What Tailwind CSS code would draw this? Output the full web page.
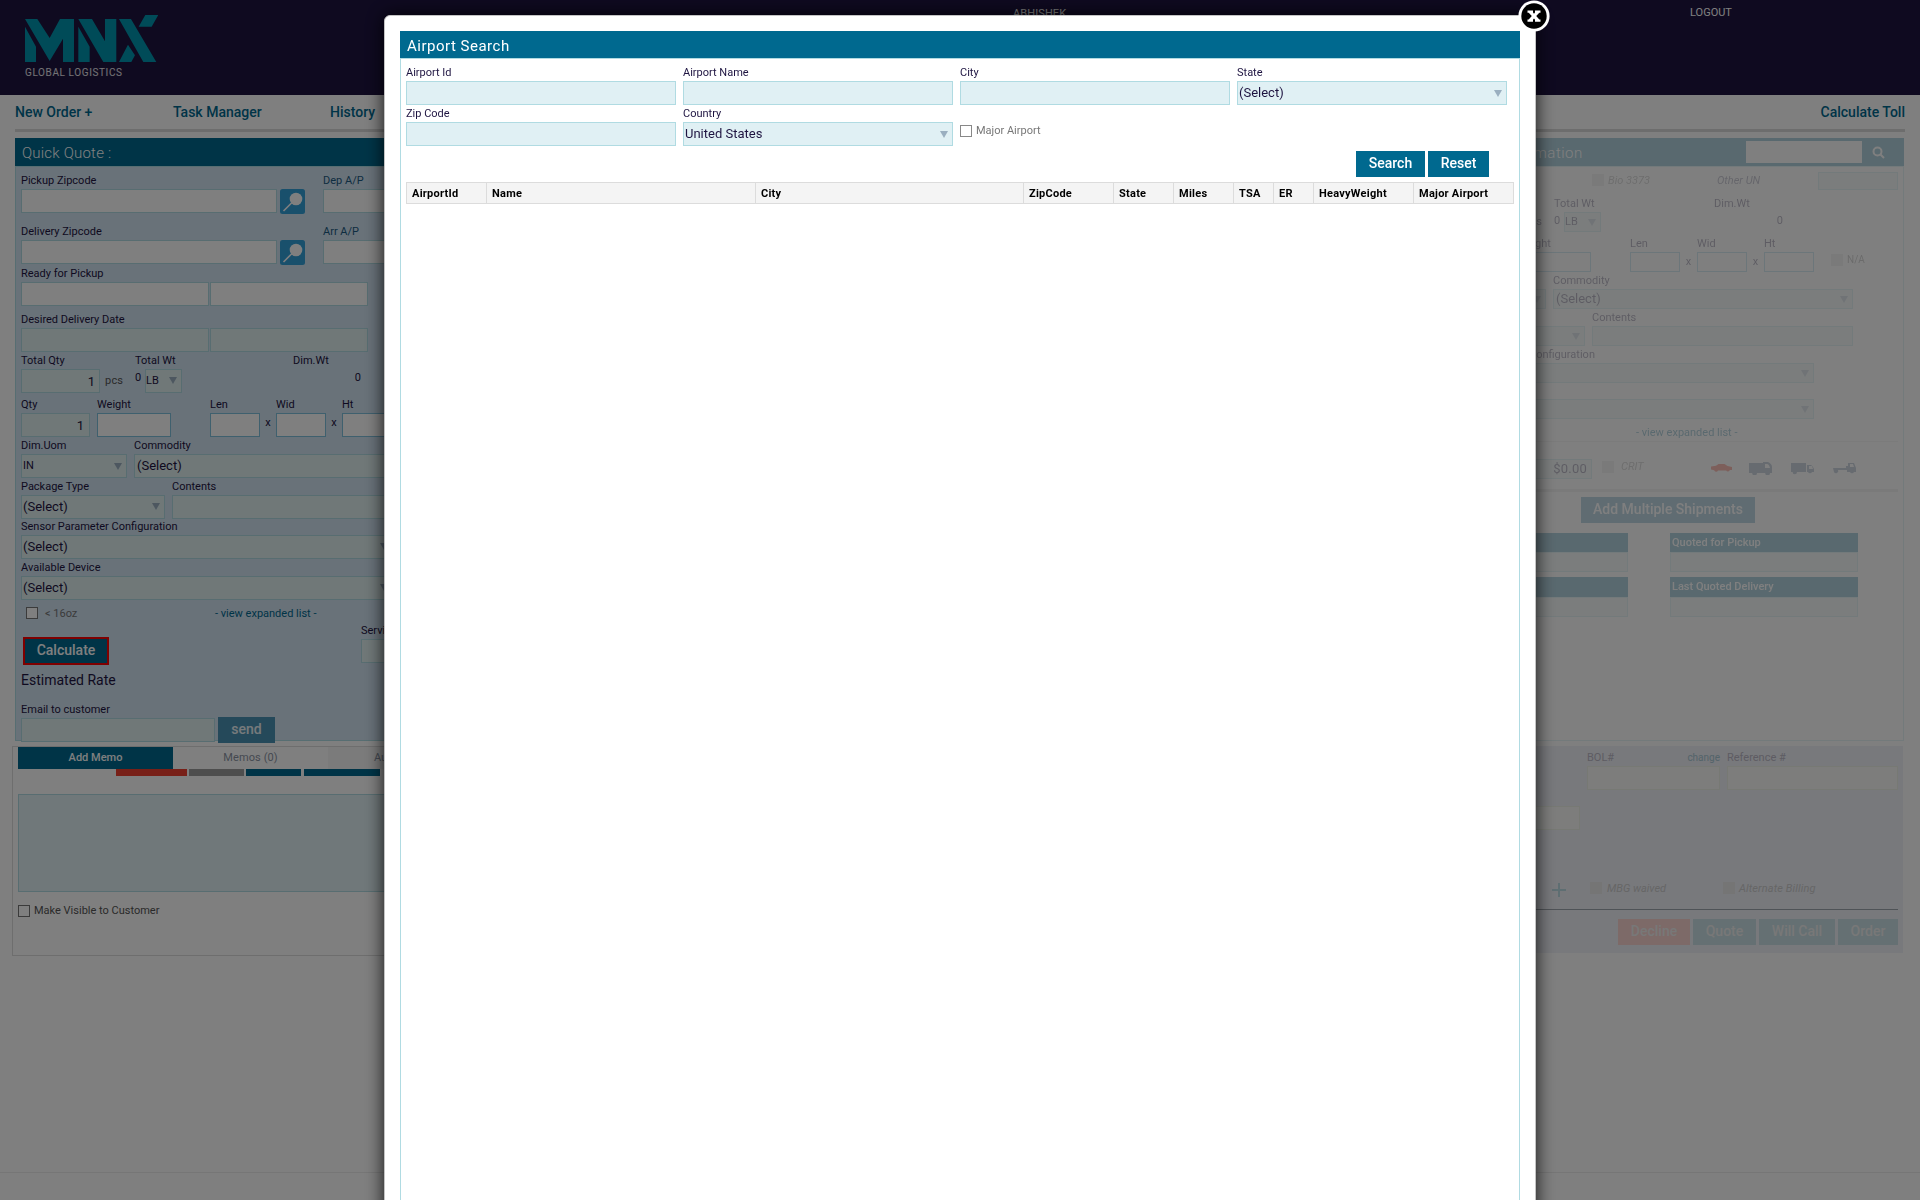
<!DOCTYPE html>
<html lang="en">
<head>
<meta charset="utf-8">
<title>MNX Global Logistics</title>
<script src="https://cdn.jsdelivr.net/npm/@tailwindcss/browser@4"></script>
</head>
<body class="relative h-[1200px] w-[1920px] overflow-hidden bg-white font-['Roboto',sans-serif] text-[11px] leading-[16px] text-[#1e1441]">
<svg class="hidden">
  <symbol id="lens" viewBox="0 0 25 25"><rect width="25" height="25" rx="2.5" fill="#33a1d9"/><circle cx="16" cy="10" r="6.3" fill="#fff"/><path d="M3.5 22 12 13.5" stroke="#fff" stroke-width="1.6"/></symbol>
  <symbol id="tri" viewBox="0 0 8 7"><path d="M0 0h8L4 7z" fill="#9aafc0"/></symbol>
</svg>

<header class="flex h-[95px] bg-[#1e1441] text-white">
  <div class="w-[988px] pl-[25px] pt-[15px]">
    <svg class="h-[47px] w-[133.3px]" viewBox="75 45 400 141" fill="#0097b0"><path d="M75 80 108 140V186H75zM75 57H112L149 114 180 57H222V186H189V116L149 183zM235 80 269 140V186H235zM235 57H276L315 124V57H349V186H310zM357 57H393L469 186H430zM384 134 405 166 394 186H357zM436 45H475L455 80H416z"/></svg>
    <div class="mt-[3px] text-[10px] tracking-[0.6px] text-white/90">GLOBAL LOGISTICS</div>
  </div>
  <div class="w-[677px] pl-[25px] pt-[6px] tracking-[0.1px]">ABHISHEK</div>
  <div class="pl-[25px] pt-[5px]">LOGOUT</div>
</header>

<nav class="mx-[15px] flex h-[37px] border-b-3 border-[#dadada] pt-[9px] text-[14px] font-medium text-[#00698f]">
  <div class="w-[158px]">New Order +</div>
  <div class="w-[157px]">Task Manager</div>
  <div>History</div>
  <div class="ml-auto">Calculate Toll</div>
</nav>

<main class="mt-[6px] flex h-[608px] justify-between pl-[15px] pr-[16px]">
  <section class="w-[500px]">
    <h2 class="h-[28px] bg-[#00698f] pl-[7px] text-[15px] leading-[31px] font-light tracking-[0.2px] text-white">Quick Quote :</h2>
    <div class="h-[575px] border border-[#aedde4] bg-[#d2e4f3] pl-[5px]">
      <div class="flex h-[46px] items-end">
        <div class="w-[256px]">Pickup Zipcode<div class="h-6 border border-[#b0dbe2] bg-white"></div></div>
        <svg class="-mb-px ml-[3px] size-[25px]"><use href="#lens"/></svg>
        <div class="ml-[18px] w-[150px] text-[#1c5a82]">Dep A/P<div class="h-6 border border-[#b0dbe2] bg-white"></div></div>
      </div>
      <div class="flex h-[51px] items-end">
        <div class="w-[256px]">Delivery Zipcode<div class="h-6 border border-[#b0dbe2] bg-white"></div></div>
        <svg class="-mb-px ml-[3px] size-[25px]"><use href="#lens"/></svg>
        <div class="ml-[18px] w-[150px] text-[#1c5a82]">Arr A/P<div class="h-6 border border-[#b0dbe2] bg-white"></div></div>
      </div>
      <div class="flex h-[42px] items-end gap-px">
        <div class="w-[188px]">Ready for Pickup<div class="h-6 border border-[#b0dbe2] bg-white"></div></div>
        <div class="h-6 w-[158px] border border-[#b0dbe2] bg-white"></div>
      </div>
      <div class="flex h-[46px] items-end gap-px">
        <div class="w-[188px]">Desired Delivery Date<div class="h-6 border border-[#b0dbe2] bg-[#e0f0f1]"></div></div>
        <div class="h-6 w-[158px] border border-[#b0dbe2] bg-[#e0f0f1]"></div>
      </div>
      <div class="flex h-[41px] items-end">
        <div class="w-[79px]">Total Qty<div class="h-6 border border-[#b0dbe2] bg-[#e0f0f1] pr-[4px] text-right text-[13px] leading-[23px]">1</div></div>
        <div class="w-[30px] pl-[5px] leading-6 tracking-[0.2px] text-[#555]">pcs</div>
        <div class="w-[158px] pl-[5px]">Total Wt
          <div class="flex h-6"><span class="w-[10px] leading-[17px]">0</span><span class="flex w-[37px] items-center justify-between border border-[#b0dbe2] bg-[#e0f0f1] pb-px pr-[4px]">LB<svg class="h-[7px] w-[8px]"><use href="#tri"/></svg></span></div>
        </div>
        <div class="w-[74px] pl-[5px]">Dim.Wt<div class="h-6 pr-[1px] text-right leading-[17px]">0</div></div>
      </div>
      <div class="flex h-[44px] items-end">
        <div class="w-[69px]">Qty<div class="h-6 border border-[#b0dbe2] bg-[#e0f0f1] pr-[5px] text-right text-[13px] leading-[24px]">1</div></div>
        <div class="ml-[7px] w-[74px]">Weight<div class="h-6 border border-[#7fc0dd] bg-white"></div></div>
        <div class="ml-[39px] w-[50px]">Len<div class="h-6 border border-[#7fc0dd] bg-white"></div></div>
        <div class="w-[16px] pb-[6px] text-center">x</div>
        <div class="w-[50px]">Wid<div class="h-6 border border-[#7fc0dd] bg-white"></div></div>
        <div class="w-[16px] pb-[6px] text-center">x</div>
        <div class="w-[50px]">Ht<div class="h-6 border border-[#7fc0dd] bg-white"></div></div>
      </div>
      <div class="flex h-[41px] items-end gap-[7px]">
        <div class="w-[106px]">Dim.Uom<div class="flex h-6 items-center justify-between border border-[#b0dbe2] bg-[#e0f0f1] pl-px pr-[4px]">IN<svg class="h-[7px] w-[8px]"><use href="#tri"/></svg></div></div>
        <div class="w-[300px]">Commodity<div class="h-6 border border-[#b0dbe2] bg-[#e0f0f1] pl-[2px] text-[13px] leading-[22px]">(Select)</div></div>
      </div>
      <div class="flex h-[41px] items-end gap-[7px]">
        <div class="w-[144px]">Package Type<div class="flex h-6 items-center justify-between border border-[#b0dbe2] bg-[#e0f0f1] pb-px pl-px pr-[4px] text-[13px]">(Select)<svg class="h-[7px] w-[8px]"><use href="#tri"/></svg></div></div>
        <div class="w-[262px]">Contents<div class="h-6 border border-[#b0dbe2] bg-[#e0f0f1]"></div></div>
      </div>
      <div class="flex h-[40px] w-[370px] flex-col justify-end">Sensor Parameter Configuration<div class="flex h-6 items-center border border-[#b0dbe2] bg-[#e0f0f1] pb-px pl-px text-[13px]"><span class="w-[357px]">(Select)</span><svg class="h-[7px] w-[8px]"><use href="#tri"/></svg></div></div>
      <div class="flex h-[41px] w-[370px] flex-col justify-end">Available Device<div class="flex h-6 items-center border border-[#b0dbe2] bg-[#e0f0f1] pb-px pl-px text-[13px]"><span class="w-[357px]">(Select)</span><svg class="h-[7px] w-[8px]"><use href="#tri"/></svg></div></div>
      <div class="flex h-[21px] items-end pl-[5px]">
        <span class="mb-[2px] size-3 border border-[#777] bg-white"></span>
        <span class="-mb-px ml-[7px] w-[170px] text-[#777]">&lt; 16oz</span>
        <span class="-mb-px text-[#00698f]">- view expanded list -</span>
      </div>
      <div class="flex h-[44px]">
        <div class="w-[340px] pl-[2px] pt-[16px]"><div class="h-[28px] w-[86px] border-2 border-[red] bg-[#00698f] text-center text-[14px] leading-[23px] font-medium text-white">Calculate</div></div>
        <div class="w-[100px] pt-[2px]">Service<div class="h-6 border border-[#b0dbe2] bg-[#e0f0f1]"></div></div>
      </div>
      <div class="h-[37px] pt-[7px] text-[14px]">Estimated Rate</div>
      <div class="flex items-end gap-[3px]">
        <div class="w-[194px]">Email to customer<div class="h-6 border border-[#b0dbe2] bg-[#e0f0f1]"></div></div>
        <div class="-mb-px h-[26px] w-[57px] bg-[#4a93b5] text-center text-[14px] leading-6 font-medium text-white/90">send</div>
      </div>
    </div>
  </section>

  <section class="w-[384px] opacity-30">
    <h2 class="flex h-[28px] items-center bg-[#00698f] text-[15px] leading-[30px] font-light tracking-[0.5px] text-white">
      <span class="w-[226px] pl-[8px] pt-[2px]">rmation</span>
      <span class="h-[22px] w-[116px] bg-white"></span>
      <svg class="ml-[10px] size-[13px]" viewBox="0 0 13 13" fill="none" stroke="#fff" stroke-width="2"><circle cx="5.5" cy="5.5" r="4"/><path d="m8.5 8.5 3.5 3.5"/></svg>
    </h2>
    <div class="h-[575px] border border-[#b0dbe2]">
      <div class="flex h-[27px] items-start pl-[71px] pt-[5px] italic">
        <span class="mt-[2px] size-3 bg-[#ddd]"></span><span class="w-[113px] pl-[4px] pt-px text-[#888]">Bio 3373</span><span class="w-[101px] pt-px text-[#557]">Other UN</span><span class="h-[18px] w-[80px] border border-[#b0dbe2] bg-[#e0f0f1]"></span>
      </div>
      <div class="flex h-[38px] items-end">
        <div class="h-5 w-[33px] pr-[12px] text-right leading-[20px]">pcs</div>
        <div class="w-[160px]">Total Wt<div class="flex h-5 leading-[18px]"><span class="w-[10px]">0</span><span class="flex w-[37px] items-center justify-between border border-[#b0dbe2] bg-[#e0f0f1] pr-[4px]">LB<svg class="h-[7px] w-[8px]"><use href="#tri"/></svg></span></div></div>
        <div class="w-[76px]">Dim.Wt<div class="h-5 pr-[7px] text-right leading-[18px]">0</div></div>
      </div>
      <div class="flex h-[40px] items-end">
        <div class="w-[70px]"><div class="-ml-[4px]">Weight</div><div class="h-5 border border-[#7fc0dd]"></div></div>
        <div class="ml-[39px] w-[50px]">Len<div class="h-5 border border-[#7fc0dd]"></div></div>
        <div class="w-[17px] pb-[2px] text-center">x</div>
        <div class="w-[50px]">Wid<div class="h-5 border border-[#7fc0dd]"></div></div>
        <div class="w-[17px] pb-[2px] text-center">x</div>
        <div class="w-[50px]">Ht<div class="h-5 border border-[#7fc0dd]"></div></div>
        <span class="mb-[6px] ml-[17px] size-3 bg-[#ddd]"></span><span class="mb-[4px] ml-[4px] text-[10px] text-[#777]">N/A</span>
      </div>
      <div class="flex h-[37px] items-end gap-[7px]">
        <div class="flex h-5 w-[25px] items-center justify-end border border-[#b0dbe2] bg-[#e0f0f1] pr-[4px]"><svg class="h-[7px] w-[8px]"><use href="#tri"/></svg></div>
        <div class="w-[300px]">Commodity<div class="flex h-5 items-center justify-between border border-[#b0dbe2] bg-[#e0f0f1] pl-[2px] pr-[4px] text-[13px]">(Select)<svg class="h-[7px] w-[8px]"><use href="#tri"/></svg></div></div>
      </div>
      <div class="flex h-[37px] items-end gap-[7px]">
        <div class="flex h-5 w-[64px] items-center justify-end border border-[#b0dbe2] bg-[#e0f0f1] pr-[4px]"><svg class="h-[7px] w-[8px]"><use href="#tri"/></svg></div>
        <div class="w-[261px]">Contents<div class="h-5 border border-[#b0dbe2] bg-[#e0f0f1]"></div></div>
      </div>
      <div class="flex h-[37px] w-[293px] flex-col justify-end"><span class="pl-[8px]">Configuration</span><div class="flex h-5 items-center justify-end border border-[#b0dbe2] bg-[#e0f0f1] pr-[4px]"><svg class="h-[7px] w-[8px]"><use href="#tri"/></svg></div></div>
      <div class="mt-[16px] flex h-5 w-[293px] items-center justify-end border border-[#b0dbe2] bg-[#e0f0f1] pr-[4px]"><svg class="h-[7px] w-[8px]"><use href="#tri"/></svg></div>
      <div class="mr-[5px] h-[23px] border-b border-[#e4e4e4] pl-[115px] pt-[6px] text-[#00698f]">- view expanded list -</div>
      <div class="mr-[5px] flex h-[50px] items-start border-b-3 border-[#dadada] pt-[17px]">
        <div class="h-5 w-[71px] border border-[#b0dbe2] bg-[#e0f0f1] pr-[4px] text-right text-[13px] leading-[18px] tracking-[0.2px]">$0.00</div>
        <span class="ml-[10px] mt-[2px] size-3 bg-[#ddd]"></span><span class="w-[97px] pl-[7px] italic text-[#888]">CRIT</span>
        <svg class="mt-[3px] h-[13px] w-[146px]" viewBox="0 0 146 13" fill="#5c7a9a">
          <path d="M0 4.500 5 3.800 7.500 2h6L16.500 4 21 5v3h-2.200a2 2 0 0 1-3.600 0.500H7a2 2 0 0 1-3.800-0.300L0 7.500z" fill="#f02a10"/>
          <path d="M38 1H52V0h5q4 2 4 5v6h-2a2.400 2.400 0 0 1-4.800 0H46a2.400 2.400 0 0 1-4.800 0H38zM54 2v4h5q-1-4-3-4z" fill-rule="evenodd"/>
          <path d="M80 1h15v9H86a2.200 2.200 0 0 1-4.400 0H80zM96 3h4q2 1 3 4v3h-2a2.200 2.200 0 0 1-4 0h-1zM98 4v3h4l-1-3z" fill-rule="evenodd"/>
          <path d="M122 6h13V4h2V1h6l2 5v4h-2a2.200 2.200 0 0 1-4 0h-3V8h-9a2.200 2.200 0 0 1-4 2zM139 2v3h4l-1-3z" fill-rule="evenodd"/>
        </svg>
      </div>
      <div class="ml-[60px] mt-[5px] h-[26px] w-[174px] bg-[#2f7ca5] text-center text-[14px] leading-6 font-medium text-white">Add Multiple Shipments</div>
      <div class="mt-[10px] grid grid-cols-[107px_188px] gap-x-[42px] gap-y-[5px] leading-[19px] font-medium text-white">
        <div><div class="h-[19px] bg-[#00698f]"></div><div class="h-5 border border-[#b0dbe2] bg-[#e0f0f1]"></div></div>
        <div><div class="h-[19px] bg-[#00698f] pl-[2px]">Quoted for Pickup</div><div class="h-5 border border-[#b0dbe2] bg-[#e0f0f1]"></div></div>
        <div><div class="h-5 bg-[#00698f]"></div><div class="h-5 border border-[#b0dbe2] bg-[#e0f0f1]"></div></div>
        <div><div class="h-5 bg-[#00698f] pl-[2px]">Last Quoted Delivery</div><div class="h-5 border border-[#b0dbe2] bg-[#e0f0f1]"></div></div>
      </div>
    </div>
  </section>
</main>

<div class="flex items-start justify-between pl-[12px] pr-[17px]">
  <section class="h-[210px] w-[503px] border border-[#dcdcdc] pl-[5px]">
    <div class="flex h-[22px] text-center leading-[21px] text-[#8a93a3]">
      <div class="w-[155px] bg-[#00698f] font-medium text-white">Add Memo</div>
      <div class="w-[155px] tracking-[0.1px]">Memos (0)</div>
      <div class="w-[155px] bg-[#f6f6f6] pl-[46px] text-left">Audit</div>
    </div>
    <div class="flex h-[7px] pl-[98px]">
      <span class="w-[71px] bg-[#f04030]"></span><span class="ml-[2px] w-[55px] bg-[#9c9c9c]"></span><span class="ml-[2px] w-[55px] bg-[#00698f]"></span><span class="ml-[3px] w-[76px] bg-[#00698f]"></span>
    </div>
    <div class="mt-[18px] h-[98px] border border-[#b0dbe2] bg-[#e0f0f4]"></div>
    <label class="mt-[11px] flex items-center gap-[4px] text-[#555]"><span class="size-3 border border-[#777]"></span>Make Visible to Customer</label>
  </section>

  <section class="h-[207px] w-[383px] bg-[#f0f2f9] pr-[5px] text-[#bcb9c6]">
    <div class="flex pl-[67px] pt-[4px]">
      <div class="w-[133px]"><div class="flex justify-between">BOL#<span class="text-[10px] text-[#a8c8d4]">change</span></div><div class="h-6 border border-[#eef3e8] bg-[#fafbf8]"></div></div>
      <div class="ml-[7px] w-[171px]">Reference #<div class="h-6 border border-[#eef3e8] bg-[#fafbf8]"></div></div>
    </div>
    <div class="mt-[16px] h-6 w-[60px] border border-[#eef3e8] bg-[#fafbf8]"></div>
    <div class="mt-[51px] flex h-[29px] items-start border-b border-[#9fa6ae] italic text-[#cdcdcd]">
      <svg class="ml-[32px] mt-[2px] size-[14px]" viewBox="0 0 14 14"><path d="M7 0v14M0 7h14" stroke="#bddde5" stroke-width="2"/></svg>
      <span class="ml-[24px] mt-[1px] size-3 bg-[#eaeaea]"></span><span class="w-[121px] pl-[5px]">MBG waived</span><span class="mt-[1px] size-3 bg-[#eaeaea]"></span><span class="pl-[4px] tracking-[0.1px]">Alternate Billing</span>
    </div>
    <div class="mt-[9px] flex justify-end gap-[3px] text-center text-[14px] leading-6 font-medium text-[#f0f0f0]">
      <div class="h-[26px] w-[72px] bg-[#fad4d0]">Decline</div><div class="h-[26px] w-[63px] bg-[#cbe0e6]">Quote</div><div class="h-[26px] w-[76px] bg-[#cbe0e6]">Will Call</div><div class="h-[26px] w-[60px] bg-[#cbe0e6]">Order</div>
    </div>
  </section>
</div>
<hr class="mt-[216px] border-[#ececec]">

<div class="absolute inset-0 bg-black/50"></div>

<div class="absolute left-[384px] top-[15px] h-[1220px] w-[1152px] rounded-[6px] border border-[#c4c4c4] bg-white p-[15px] shadow-[0_0_18px_rgba(0,0,0,0.85)]">
  <div class="flex h-full flex-col">
    <h1 class="h-[27px] bg-[#00698f] pl-[7px] text-[15px] leading-[31px] tracking-[0.5px] text-white">Airport Search</h1>
    <div class="grow border border-[#b0dbe2] pl-[5px] pt-[6px]">
      <div class="grid auto-rows-[41px] grid-cols-[270px_270px_270px_270px] gap-x-[7px]">
        <div>Airport Id<div class="h-6 border border-[#b0dbe2] bg-[#e0f0f4]"></div></div>
        <div>Airport Name<div class="h-6 border border-[#b0dbe2] bg-[#e0f0f4]"></div></div>
        <div>City<div class="h-6 border border-[#b0dbe2] bg-[#e0f0f4]"></div></div>
        <div>State<div class="flex h-6 items-center justify-between border border-[#b0dbe2] bg-[#e0f0f4] pl-px pr-[4px] text-[13px]">(Select)<svg class="h-[7px] w-[8px]"><use href="#tri"/></svg></div></div>
        <div>Zip Code<div class="h-6 border border-[#b0dbe2] bg-[#e0f0f4]"></div></div>
        <div>Country<div class="flex h-6 items-center justify-between border border-[#b0dbe2] bg-[#e0f0f4] pl-px pr-[4px] text-[13px]">United States<svg class="h-[7px] w-[8px]"><use href="#tri"/></svg></div></div>
        <label class="mt-[17px] flex h-[16px] items-center gap-[4px] text-[#777]"><span class="size-3 border border-[#888]"></span>Major Airport</label>
      </div>
      <div class="mt-[4px] flex gap-[3px] pl-[950px] text-center text-[14px] leading-6 font-medium text-white">
        <div class="h-[26px] w-[69px] bg-[#00698f]">Search</div><div class="h-[26px] w-[61px] bg-[#00698f]">Reset</div>
      </div>
      <div class="mt-[5px] grid h-[22px] w-[1108px] grid-cols-[80px_269px_268px_90px_60px_60px_40px_40px_100px_99px] divide-x divide-[#dcdcdc] border border-[#dcdcdc] bg-[#f4f4f4] leading-[21px] font-bold tracking-[0.25px] text-black *:pl-[5px]">
        <div>AirportId</div><div>Name</div><div>City</div><div>ZipCode</div><div>State</div><div>Miles</div><div>TSA</div><div>ER</div><div>HeavyWeight</div><div>Major Airport</div>
      </div>
    </div>
  </div>
  <svg class="absolute -top-[16px] right-[-15px] size-[32px]" viewBox="0 0 32 32"><circle cx="16" cy="16" r="15.6" fill="#fff"/><circle cx="16" cy="16" r="12.7" fill="#000"/><path d="M9.5 10.5h5.500v2l1 1.200 1-1.200v-2h5.500v2.200h-1.200L18.200 16l3.100 3.500h1.200v2.200H17v-2l-1-1.200-1 1.200v2H9.500v-2.200h1.200L13.800 16l-3.100-3.300H9.500z" fill="#fff"/></svg>
</div>
</body>
</html>
